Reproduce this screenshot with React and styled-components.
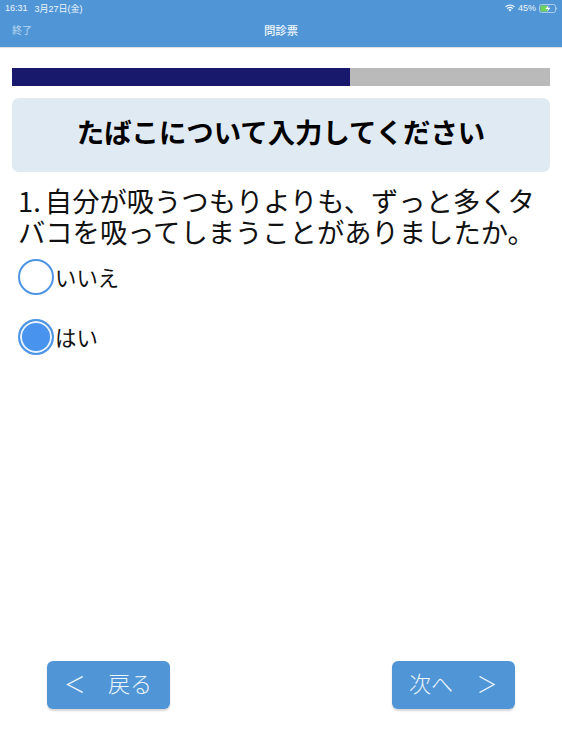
import React from "react";
import styled, { createGlobalStyle } from "styled-components";

const Global = createGlobalStyle`
  html, body { margin: 0; padding: 0; background: #fff; }
  body { font-family: "Noto Sans CJK JP", "Noto Sans", sans-serif; }
  #root { height: 750px; }
`;
const Page = styled.div`
  width: 562px; height: 750px; display: flex; flex-direction: column; overflow: hidden; background: #fff;
`;
const Header = styled.header`
  height: 47px; flex: none; background: #5096d6; color: #fff; display: flex; flex-direction: column;
  box-shadow: 0 1px 1px rgba(0,0,0,.12);
`;
const StatusBar = styled.div`
  height: 16px; padding: 0 4px 0 5px; display: flex; align-items: center; justify-content: space-between;
  font: 9px "Liberation Sans", "Noto Sans CJK JP", sans-serif; color: #eef5fb;
`;
const StatusGroup = styled.div`
  display: flex; align-items: center; gap: ${p => p.$gap}px;
`;
const NavBar = styled.div`
  height: 30px; position: relative; display: flex; align-items: center; justify-content: center;
`;
const NavLeft = styled.span`
  position: absolute; left: 12px; top: 7px; font-size: 10px; line-height: 14px; color: #b9d6ef;
`;
const NavTitle = styled.span`
  font-size: 11.4px; line-height: 14px; margin-bottom: 2px; font-weight: 500; color: #f2f7fc;
`;
const Main = styled.main`
  flex: 1; padding: 21px 12px 0; display: flex; flex-direction: column; min-height: 0;
`;
const Track = styled.div`
  height: 18px; background: #bababa; flex: none;
`;
const Fill = styled.div`
  height: 100%; background: #18186c;
`;
const Banner = styled.h1`
  margin: 12px 0 0; height: 74px; flex: none; box-sizing: border-box; padding-bottom: 8px;
  background: #e0eaf2; border-radius: 7px;
  display: flex; align-items: center; justify-content: center;
  font-size: 27.4px; font-weight: 700; color: #000;
`;
const Question = styled.p`
  margin: 13px 0 0 6px; font-size: 27.3px; line-height: 30.5px; word-spacing: -2px; color: #111; width: 530px;
`;
const Options = styled.div`
  margin: 12px 0 0 6px; display: flex; flex-direction: column; gap: 23px;
`;
const Option = styled.label`
  height: 37px; display: flex; align-items: center; font-size: 21.4px; color: #111;
`;
const Radio = styled.span`
  width: 36px; height: 36px; box-sizing: border-box; border-radius: 50%; border: 2.5px solid #4e95e4;
  background: ${p => (p.$on ? "#4793ee" : "#fff")};
  box-shadow: ${p => (p.$on ? "inset 0 0 0 2px #e9f3fd" : "none")};
  flex: none; margin-right: 1px;
`;
const Footer = styled.footer`
  flex: none; height: 89px; padding: 0 47px; display: flex; justify-content: space-between; align-items: flex-start;
`;
const NavButton = styled.button`
  width: 123px; height: 48px; border: 0; border-radius: 6px; background: #5096d6; color: #eef5fb;
  box-shadow: 0 2px 2px rgba(0,0,0,.16); font: 300 22px "Noto Sans CJK JP", sans-serif;
  display: flex; align-items: center; justify-content: space-between;
  padding: ${p => (p.$next ? "0 19px 1px 17px" : "0 18px 1px 19px")};
`;
const ButtonLabel = styled.span`
  padding-bottom: 6px;
`;
const Chevron = styled.svg`
  width: 17px; height: 17px; fill: none; stroke: #eef5fb; stroke-width: 1.4;
`;

const Wifi = () => (
  <svg width="10" height="8" viewBox="0 0 22 16" aria-hidden="true">
    <path d="M1 5.500C7 .5 15 .5 21 5.500" fill="none" stroke="#fff" strokeWidth="2.4" />
    <path d="M4.700 9.200C8.500 6 13.500 6 17.300 9.200" fill="none" stroke="#fff" strokeWidth="2.4" />
    <path d="M11 15.500 7.600 12c2-1.400 4.800-1.400 6.800 0z" fill="#fff" />
  </svg>
);
const Battery = () => (
  <svg width="19" height="9" viewBox="0 0 38 18" aria-hidden="true">
    <rect x="1" y="1" width="32" height="16" rx="4" fill="none" stroke="#cfe2f2" strokeWidth="1.4" />
    <rect x="3" y="3" width="14" height="12" rx="2" fill="#6fd35c" />
    <path d="M35 6.500c2 .5 2 4.500 0 5z" fill="#cfe2f2" />
    <path d="M19 2 13 10h5l-2 6 7-8.500h-5z" fill="#fff" />
  </svg>
);

export default function App() {
  return (
    <Page>
      <Global />
      <Header>
        <StatusBar>
          <StatusGroup $gap={7}><span>16:31</span><span>3月27日(金)</span></StatusGroup>
          <StatusGroup $gap={3}><Wifi /><span>45%</span><Battery /></StatusGroup>
        </StatusBar>
        <NavBar>
          <NavLeft>終了</NavLeft>
          <NavTitle>問診票</NavTitle>
        </NavBar>
      </Header>
      <Main>
        <Track><Fill style={{ width: `${(338 / 538) * 100}%` }} /></Track>
        <Banner>たばこについて入力してください</Banner>
        <Question>1. 自分が吸うつもりよりも、ずっと多くタバコを吸ってしまうことがありましたか。</Question>
        <Options>
          <Option><Radio />いいえ</Option>
          <Option><Radio $on />はい</Option>
        </Options>
      </Main>
      <Footer>
        <NavButton>
          <Chevron viewBox="0 0 17 17"><path d="M16.700 .5 1.700 8.500 16.700 16.500" /></Chevron>
          <ButtonLabel>戻る</ButtonLabel>
        </NavButton>
        <NavButton $next>
          <ButtonLabel>次へ</ButtonLabel>
          <Chevron viewBox="0 0 17 17"><path d="M.5 .5 15 8.500 .5 16.500" /></Chevron>
        </NavButton>
      </Footer>
    </Page>
  );
}
